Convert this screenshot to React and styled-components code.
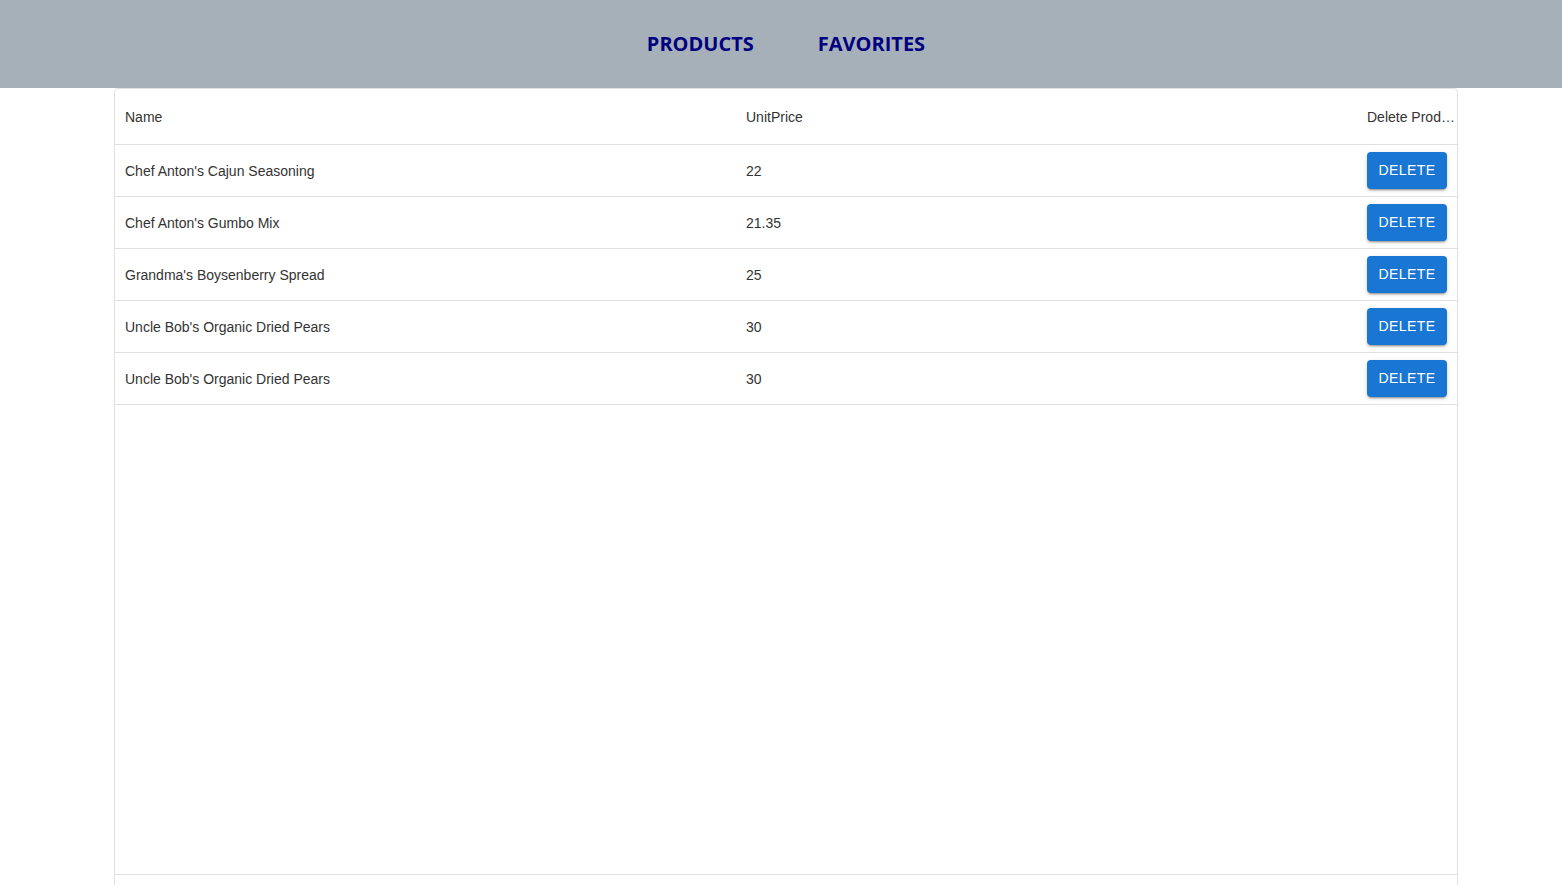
import React from 'react';
import styled, { createGlobalStyle } from 'styled-components';

const GlobalStyle = createGlobalStyle`
  body {
    margin: 0;
    background: #fff;
    font-family: "Liberation Sans", Arial, sans-serif;
  }
`;

const NavBar = styled.nav`
  height: 88px;
  background-color: #a6b0b9;
  display: flex;
  align-items: center;
  justify-content: center;
  gap: 64px;
  padding-left: 10px;
  box-sizing: border-box;
`;

const NavLink = styled.a`
  font-family: "Open Sans", "DejaVu Sans", sans-serif;
  font-weight: 700;
  font-size: 20px;
  color: #000080;
  text-decoration: none;
  cursor: pointer;
  margin-top: -2px;
`;

const Grid = styled.div`
  margin-left: 114px;
  width: 1344px;
  height: 840px;
  box-sizing: border-box;
  border: 1px solid #e0e0e0;
  border-radius: 4px;
  display: flex;
  flex-direction: column;
  font-size: 14px;
  color: #333;
`;

const Row = styled.div`
  display: grid;
  grid-template-columns: 621px 621px 100px;
  height: ${({ $h }) => $h}px;
  border-bottom: 1px solid #e0e0e0;
  box-sizing: border-box;
  flex-shrink: 0;
`;

const Cell = styled.div`
  display: flex;
  align-items: center;
  padding: 0 ${({ $header }) => ($header ? '2px' : '10px')} 0 10px;
  overflow: hidden;
  white-space: nowrap;
  min-width: 0;
`;

const HeaderTitle = styled.span`
  overflow: hidden;
  white-space: nowrap;
  text-overflow: ellipsis;
`;

const Body = styled.div`
  flex: 1;
`;

const Footer = styled.div`
  min-height: 52px;
  border-top: 1px solid #e0e0e0;
`;

const DeleteButton = styled.button`
  font-family: "Liberation Sans", Arial, sans-serif;
  font-weight: 400;
  font-size: 14px;
  line-height: 1.75;
  letter-spacing: 0.02857em;
  text-transform: uppercase;
  color: #fff;
  background-color: #1976d2;
  border: none;
  border-radius: 4px;
  padding: 6px 0;
  width: 80px;
  height: 37px;
  cursor: pointer;
  box-shadow: 0 3px 1px -2px rgba(0, 0, 0, 0.2), 0 2px 2px 0 rgba(0, 0, 0, 0.14),
    0 1px 5px 0 rgba(0, 0, 0, 0.12);
`;

const products = [
  { name: "Chef Anton's Cajun Seasoning", price: 22 },
  { name: "Chef Anton's Gumbo Mix", price: 21.35 },
  { name: "Grandma's Boysenberry Spread", price: 25 },
  { name: "Uncle Bob's Organic Dried Pears", price: 30 },
  { name: "Uncle Bob's Organic Dried Pears", price: 30 },
];

export default function App() {
  return (
    <>
      <GlobalStyle />
      <NavBar>
        <NavLink>PRODUCTS</NavLink>
        <NavLink>FAVORITES</NavLink>
      </NavBar>
      <Grid>
        <Row $h={56}>
          <Cell $header><HeaderTitle>Name</HeaderTitle></Cell>
          <Cell $header><HeaderTitle>UnitPrice</HeaderTitle></Cell>
          <Cell $header><HeaderTitle>Delete Product</HeaderTitle></Cell>
        </Row>
        <Body>
          {products.map((p, i) => (
            <Row key={i} $h={52}>
              <Cell>{p.name}</Cell>
              <Cell>{p.price}</Cell>
              <Cell>
                <DeleteButton>Delete</DeleteButton>
              </Cell>
            </Row>
          ))}
        </Body>
        <Footer />
      </Grid>
    </>
  );
}
